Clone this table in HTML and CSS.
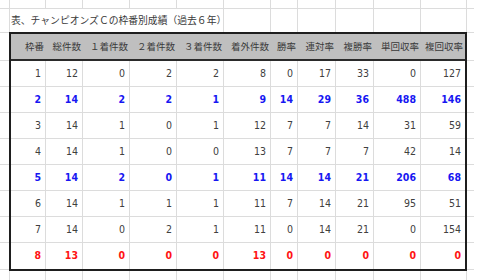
FILE: index.html
```html
<!DOCTYPE html>
<html lang="ja">
<head>
<meta charset="utf-8">
<title>チャンピオンズＣ 枠番別成績</title>
<link rel="stylesheet" href="styles.css">
</head>
<body>
<div class="sheet">
  <div class="strip strip-top">
    <span class="gutter"></span>
    <span class="c w36"></span><span class="c w37"></span><span class="c w47"></span><span class="c w47"></span><span class="c w47"></span><span class="c w47"></span><span class="c w27"></span><span class="c w38"></span><span class="c w38"></span><span class="c w47"></span><span class="c w46"></span>
    <span class="rest"></span>
  </div>
  <div class="title-row">
    <span class="gutter"></span>
    <span class="title">表、チャンピオンズＣの枠番別成績（過去６年）</span>
    <span class="c w47"></span><span class="c w27"></span><span class="c w38"></span><span class="c w38"></span><span class="c w47"></span><span class="c w46"></span>
    <span class="rest"></span>
  </div>
  <div class="mid">
    <div class="side side-left">
      <span class="side-head"></span>
      <span class="side-cell"></span><span class="side-cell"></span><span class="side-cell"></span><span class="side-cell"></span>
      <span class="side-cell"></span><span class="side-cell"></span><span class="side-cell"></span><span class="side-cell"></span>
    </div>
    <div class="data" role="table">
      <div class="row head" role="row">
        <span class="h">枠番</span><span class="h">総件数</span><span class="h">１着件数</span><span class="h">２着件数</span><span class="h">３着件数</span><span class="h">着外件数</span><span class="h">勝率</span><span class="h">連対率</span><span class="h">複勝率</span><span class="h">単回収率</span><span class="h">複回収率</span>
      </div>
      <div class="row" role="row">
        <span class="d">1</span><span class="d">12</span><span class="d">0</span><span class="d">2</span><span class="d">2</span><span class="d">8</span><span class="d">0</span><span class="d">17</span><span class="d">33</span><span class="d">0</span><span class="d">127</span>
      </div>
      <div class="row hi-blue" role="row">
        <span class="d">2</span><span class="d">14</span><span class="d">2</span><span class="d">2</span><span class="d">1</span><span class="d">9</span><span class="d">14</span><span class="d">29</span><span class="d">36</span><span class="d">488</span><span class="d">146</span>
      </div>
      <div class="row" role="row">
        <span class="d">3</span><span class="d">14</span><span class="d">1</span><span class="d">0</span><span class="d">1</span><span class="d">12</span><span class="d">7</span><span class="d">7</span><span class="d">14</span><span class="d">31</span><span class="d">59</span>
      </div>
      <div class="row" role="row">
        <span class="d">4</span><span class="d">14</span><span class="d">1</span><span class="d">0</span><span class="d">0</span><span class="d">13</span><span class="d">7</span><span class="d">7</span><span class="d">7</span><span class="d">42</span><span class="d">14</span>
      </div>
      <div class="row hi-blue" role="row">
        <span class="d">5</span><span class="d">14</span><span class="d">2</span><span class="d">0</span><span class="d">1</span><span class="d">11</span><span class="d">14</span><span class="d">14</span><span class="d">21</span><span class="d">206</span><span class="d">68</span>
      </div>
      <div class="row" role="row">
        <span class="d">6</span><span class="d">14</span><span class="d">1</span><span class="d">1</span><span class="d">1</span><span class="d">11</span><span class="d">7</span><span class="d">14</span><span class="d">21</span><span class="d">95</span><span class="d">51</span>
      </div>
      <div class="row" role="row">
        <span class="d">7</span><span class="d">14</span><span class="d">0</span><span class="d">2</span><span class="d">1</span><span class="d">11</span><span class="d">0</span><span class="d">14</span><span class="d">21</span><span class="d">0</span><span class="d">154</span>
      </div>
      <div class="row hi-red" role="row">
        <span class="d">8</span><span class="d">13</span><span class="d">0</span><span class="d">0</span><span class="d">0</span><span class="d">13</span><span class="d">0</span><span class="d">0</span><span class="d">0</span><span class="d">0</span><span class="d">0</span>
      </div>
    </div>
    <div class="side side-right">
      <span class="side-head"></span>
      <span class="side-cell"></span><span class="side-cell"></span><span class="side-cell"></span><span class="side-cell"></span>
      <span class="side-cell"></span><span class="side-cell"></span><span class="side-cell"></span><span class="side-cell"></span>
    </div>
  </div>
  <div class="strip strip-bottom">
    <span class="gutter"></span>
    <span class="c w36"></span><span class="c w37"></span><span class="c w47"></span><span class="c w47"></span><span class="c w47"></span><span class="c w47"></span><span class="c w27"></span><span class="c w38"></span><span class="c w38"></span><span class="c w47"></span><span class="c w46"></span>
    <span class="rest"></span>
  </div>
</div>
</body>
</html>
```
FILE: styles.css
```css
* {
  box-sizing: border-box;
}

html, body {
  margin: 0;
  padding: 0;
  background: #ffffff;
}

body {
  font-family: "Noto Sans CJK JP", "Noto Sans", sans-serif;
  color: #333333;
}

.sheet {
  width: 474px;
  display: flex;
  flex-direction: column;
}

.strip,
.title-row {
  display: flex;
}

.strip-top {
  height: 9px;
  border-bottom: 1px solid #dcdcdc;
}

.strip-bottom {
  height: 10px;
}

.title-row {
  height: 23px;
}

.gutter {
  width: 10px;
  flex: none;
  border-right: 1px solid #dcdcdc;
}

.c {
  flex: none;
  border-right: 1px solid #dcdcdc;
}

.rest {
  width: 7px;
  flex: none;
}

.w27 { width: 27px; }
.w36 { width: 36px; }
.w37 { width: 37px; }
.w38 { width: 38px; }
.w46 { width: 46px; }
.w47 { width: 47px; }

.title {
  width: 214px;
  flex: none;
  border-right: 1px solid #dcdcdc;
  padding-left: 1px;
  font-size: 9.8px;
  line-height: 23px;
  white-space: nowrap;
  color: #3a3a3a;
}

.mid {
  display: flex;
}

.side {
  display: flex;
  flex-direction: column;
  flex: none;
}

.side-left {
  width: 9px;
}

.side-right {
  width: 7px;
}

.side-head {
  height: 29px;
  border-top: 1px solid #dcdcdc;
  border-bottom: 1px solid #dcdcdc;
}

.side-cell {
  height: 26px;
  border-bottom: 1px solid #dcdcdc;
}

.side-cell:last-child {
  height: 27px;
}

.data {
  width: 458px;
  flex: none;
  border: 2px solid #1e1e1e;
  display: grid;
  grid-template-columns: 35px 37px 47px 47px 47px 47px 27px 38px 38px 47px 44px;
}

.row {
  display: contents;
}

.h {
  height: 27px;
  background: #bfbfbf;
  border-bottom: 2px solid #2a2a2a;
  text-align: right;
  padding-right: 2px;
  font-size: 9.5px;
  line-height: 25px;
  color: #3a3a3a;
  white-space: nowrap;
  overflow: hidden;
}

.d {
  height: 26px;
  border-right: 1px solid #dcdcdc;
  border-bottom: 1px solid #dcdcdc;
  text-align: right;
  padding-right: 4px;
  font-family: "DejaVu Sans Condensed", "DejaVu Sans", sans-serif;
  font-stretch: condensed;
  font-size: 10.5px;
  line-height: 25px;
  color: #404040;
}

.d:last-child {
  border-right: none;
}

.row:last-child .d {
  border-bottom: none;
}

.hi-blue .d {
  color: #1717f2;
  font-weight: bold;
}

.hi-red .d {
  color: #ff1414;
  font-weight: bold;
}
```
